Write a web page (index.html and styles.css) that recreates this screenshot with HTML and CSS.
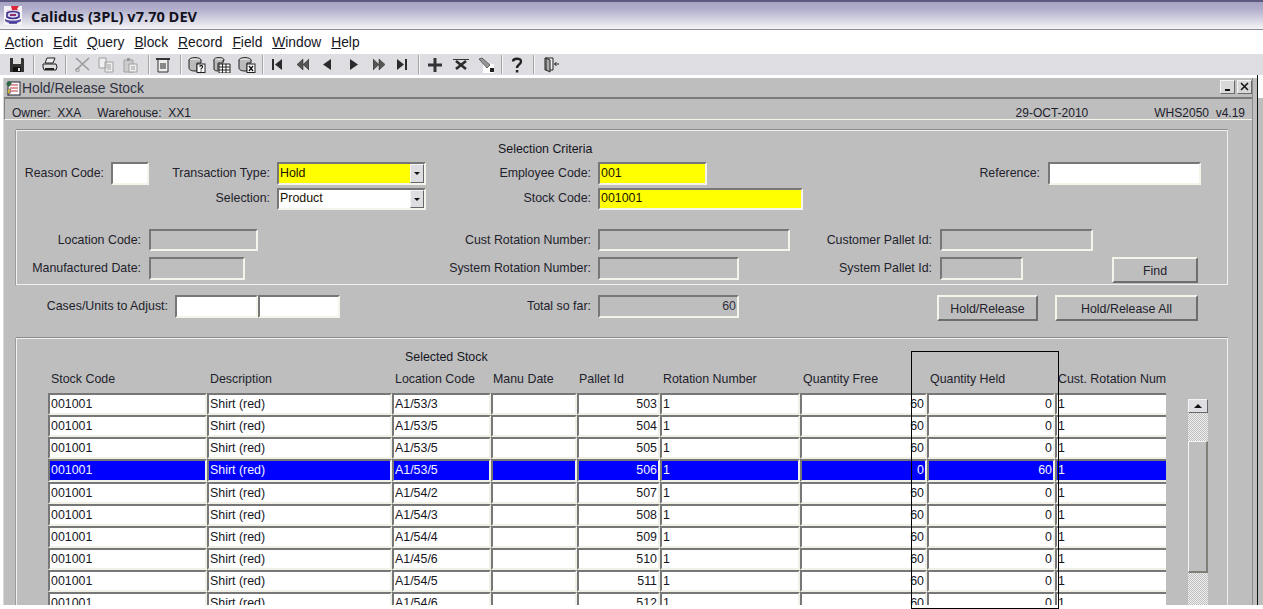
FILE: index.html
```html
<!DOCTYPE html>
<html lang="en">
<head>
<meta charset="utf-8">
<title>Calidus (3PL) v7.70 DEV</title>
<link rel="stylesheet" href="styles.css">
</head>
<body>
<div class="app">
  <header class="titlebar">
    <svg class="applogo" viewBox="0 0 18 19" width="18" height="19"><rect width="18" height="19" fill="#f6f3f6"/><path d="M7 0h8l-2 3 1 1H8z" fill="#d8283a"/><path d="M3 5h12" stroke="#e0a0b0"/><path d="M3 7c3-2 9-2 12 0v4c-3 2-9 2-12 0z" fill="#d8d4ec" stroke="#3a2f8f" stroke-width="1.600"/><path d="M6 8h6v2H6z" fill="#8f2f6f"/><path d="M1 13c4 2 12 2 16 0v2c-3 3-13 3-16 0z" fill="#5a4fa5"/><path d="M5 17h8" stroke="#3a2f8f" stroke-width="1.400"/></svg>
    <span class="apptitle">Calidus (3PL) v7.70 DEV</span>
  </header>
  <nav class="menubar">
    <span class="menu"><u>A</u>ction</span><span class="menu"><u>E</u>dit</span><span class="menu"><u>Q</u>uery</span><span class="menu"><u>B</u>lock</span><span class="menu"><u>R</u>ecord</span><span class="menu"><u>F</u>ield</span><span class="menu"><u>W</u>indow</span><span class="menu"><u>H</u>elp</span>
  </nav>
  <div class="toolbar">
    <svg class="tool t-first" viewBox="0 0 16 16"><path d="M1 1h13l1 1v13H1z" fill="#333"/><rect x="4" y="1" width="8" height="6" fill="#ddd"/><rect x="4" y="10" width="8" height="5" fill="#111"/><rect x="9" y="11" width="2" height="3" fill="#ddd"/></svg>
    <i class="sep s1"></i>
    <svg class="tool t-print" viewBox="0 0 16 16"><path d="M5 1h8L11 6H3z" fill="#eee" stroke="#222"/><path d="M1 7h13l1 3-1 3H2l-1-3z" fill="#ddd" stroke="#222"/><path d="M3 12h9" stroke="#222" stroke-width="2"/></svg>
    <i class="sep s2"></i>
    <svg class="tool t-cut" viewBox="0 0 16 16"><path d="M1 1l13 12M14 1L1 13" stroke="#9a9a9a" stroke-width="1.600" fill="none"/><circle cx="2.500" cy="13" r="1.800" fill="none" stroke="#9a9a9a"/></svg>
    <svg class="tool t-copy" viewBox="0 0 16 16"><path d="M1 1h7v10H1zM7 5h8v10H7z" fill="#eee" stroke="#a0a0a0"/><path d="M9 8h4M9 10h4M9 12h4" stroke="#a0a0a0"/></svg>
    <svg class="tool t-paste" viewBox="0 0 16 16"><path d="M2 3h9v12H2z" fill="#ccc" stroke="#a0a0a0"/><path d="M5 1h3v3H5z" fill="#999"/><path d="M7 7h8v8H7z" fill="#eee" stroke="#a0a0a0"/><path d="M9 10h4M9 12h4" stroke="#a0a0a0"/></svg>
    <i class="sep s3"></i>
    <svg class="tool t-list" viewBox="0 0 16 16"><path d="M1 1h14v2H1z" fill="#333"/><path d="M3 3v12h10V3" fill="#eee" stroke="#333"/><path d="M5 7h6M5 9h6M5 11h6" stroke="#222"/></svg>
    <i class="sep s4"></i>
    <svg class="tool t-q1" viewBox="0 0 18 16"><ellipse cx="7" cy="3" rx="6" ry="2.400" fill="#ddd" stroke="#222"/><path d="M1 3v8c0 2 3 3 6 3h2V6h4V3" fill="#bbb" stroke="#222"/><rect x="9" y="7" width="8" height="8.500" fill="#fff" stroke="#222"/><path d="M11.500 9.500c1-1.500 3.500-1 3 .7-.3 1-1.500 1-1.500 2.300M13 13.500v1" stroke="#111" fill="none" stroke-width="1.200"/></svg>
    <svg class="tool t-q2" viewBox="0 0 18 16"><ellipse cx="6" cy="3" rx="5" ry="2.400" fill="#ddd" stroke="#222"/><path d="M1 3v9c0 1.500 2 2 4 2V6h5V3" fill="#bbb" stroke="#222"/><path d="M6 7h11v9H6zM6 10h11M6 13h11M9.500 7v9M13 7v9" fill="#fff" stroke="#222"/></svg>
    <svg class="tool t-q3" viewBox="0 0 18 16"><ellipse cx="7" cy="3" rx="6" ry="2.400" fill="#ddd" stroke="#222"/><path d="M1 3v8c0 2 3 3 6 3h2V6h4V3" fill="#bbb" stroke="#222"/><rect x="9" y="7" width="8" height="8.500" fill="#fff" stroke="#222"/><path d="M11 9l4 5M15 9l-4 5" stroke="#111" stroke-width="1.300"/></svg>
    <i class="sep s5"></i>
    <svg class="nav n1" viewBox="0 0 12 13"><path d="M1 1h2v11H1zM11 1v11L4 6.500z" fill="#2b2b2b"/></svg>
    <svg class="nav n2" viewBox="0 0 12 13"><path d="M6 1v11L0 6.500zM12 1v11L6 6.500z" fill="#555" stroke="#222" stroke-width=".5"/></svg>
    <svg class="nav n3" viewBox="0 0 12 13"><path d="M10 1v11L2 6.500z" fill="#2b2b2b"/></svg>
    <svg class="nav n4" viewBox="0 0 12 13"><path d="M2 1v11l8-5.500z" fill="#2b2b2b"/></svg>
    <svg class="nav n5" viewBox="0 0 12 13"><path d="M0 1v11l6-5.500zM6 1v11l6-5.500z" fill="#555" stroke="#222" stroke-width=".5"/></svg>
    <svg class="nav n6" viewBox="0 0 12 13"><path d="M1 1v11l7-5.500zM9 1h2v11H9z" fill="#2b2b2b"/></svg>
    <i class="sep s6"></i>
    <svg class="tool t-plus" viewBox="0 0 16 16"><path d="M6.500 1h3v5.500H15v3H9.500V15h-3V9.500H1v-3h5.500z" fill="#333"/></svg>
    <svg class="tool t-del" viewBox="0 0 16 16"><path d="M0 2.500h16" stroke="#333"/><path d="M3 4l10 8M13 4L3 12" stroke="#2b2b2b" stroke-width="2.600"/></svg>
    <svg class="tool t-clear" viewBox="0 0 16 16"><rect x="5" y="7" width="11" height="9" fill="#fff"/><path d="M1 2l3-1 8 7-3 3z" fill="#999" stroke="#333" stroke-width=".7"/><rect x="12" y="11" width="4" height="4" fill="#222"/></svg>
    <i class="sep s7"></i>
    <svg class="tool t-help" viewBox="0 0 16 16"><path d="M4 4.500C4 1 12 .500 12 4.500c0 3-4 3-4 6.500" fill="none" stroke="#222" stroke-width="2.400"/><rect x="6.800" y="13" width="2.500" height="2.500" fill="#222"/></svg>
    <i class="sep s8"></i>
    <svg class="tool t-exit" viewBox="0 0 16 16"><path d="M1 1h8v12H1z" fill="#eee" stroke="#222"/><path d="M2 1l4 2v12l-4-2z" fill="#aaa" stroke="#222"/><path d="M10.500 7H15M10.500 7l2-2M10.500 7l2 2" stroke="#222" fill="none"/></svg>
  </div>
  <main class="mdi">
    <section class="window">
      <div class="winhead">
        <svg class="winicon" viewBox="0 0 16 16"><rect x="3" y="2" width="12" height="13" fill="#fff" stroke="#223"/><path d="M5 5h8M5 8h8M5 11h8" stroke="#c03040"/><path d="M1 4l3-3 3 2-3 4z" fill="#2a6a40"/><path d="M3 9l3 0-2 3 2 0-3 4 1-3H2z" fill="#e8d020" stroke="#302080" stroke-width=".4"/></svg>
        <span class="wintitle">Hold/Release Stock</span>
        <span class="winbtns"><span class="winbtn btn-min"></span><span class="winbtn btn-close">
          <svg viewBox="0 0 9 9" width="9" height="9"><path d="M1 1l7 7M8 1L1 8" stroke="#111" stroke-width="1.500"/></svg></span></span>
      </div>
      <div class="infobar">
        <span class="owner">Owner:&nbsp; XXA</span>
        <span class="wh">Warehouse:&nbsp; XX1</span>
        <span class="date">29-OCT-2010</span>
        <span class="ver">WHS2050&nbsp; v4.19</span>
      </div>
      <div class="content">
        <section class="panel criteria">
          <div class="panel-title">Selection Criteria</div>
          <div class="frow r1">
            <label class="lb w-reason">Reason Code:</label><span class="fld white f-reason"></span>
            <label class="lb w-tt">Transaction Type:</label><span class="fld yellow f-sel">Hold<span class="drop"></span></span>
            <label class="lb w-emp">Employee Code:</label><span class="fld yellow f-emp">001</span>
            <label class="lb w-ref">Reference:</label><span class="fld white f-ref"></span>
          </div>
          <div class="frow r2">
            <label class="lb w-selection">Selection:</label><span class="fld white f-sel">Product<span class="drop"></span></span>
            <label class="lb w-stock">Stock Code:</label><span class="fld yellow f-stock">001001</span>
          </div>
          <div class="frow r3">
            <label class="lb w-loc">Location Code:</label><span class="fld f-loc"></span>
            <label class="lb w-cust">Cust Rotation Number:</label><span class="fld f-cust"></span>
            <label class="lb w-cpal">Customer Pallet Id:</label><span class="fld f-cpal"></span>
          </div>
          <div class="frow r4">
            <label class="lb w-loc">Manufactured Date:</label><span class="fld f-man"></span>
            <label class="lb w-sys">System Rotation Number:</label><span class="fld f-sysrot"></span>
            <label class="lb w-spal">System Pallet Id:</label><span class="fld f-spal"></span>
            <span class="push btn b-find">Find</span>
          </div>
        </section>
        <div class="frow actions">
          <label class="lb w-cases">Cases/Units to Adjust:</label><span class="fld white f-case"></span><span class="fld white f-case2"></span>
          <label class="lb w-total">Total so far:</label><span class="fld f-total">60</span>
          <span class="push btn b-hold">Hold/Release</span>
          <span class="push btn b-all">Hold/Release All</span>
        </div>
        <section class="panel stock">
          <div class="stock-title">Selected Stock</div>
          <div class="grid head">
            <span>Stock Code</span><span>Description</span><span>Location Code</span><span>Manu Date</span><span>Pallet Id</span><span>Rotation Number</span><span>Quantity Free</span><span class="h-held">Quantity Held</span><span>Cust. Rotation Num</span>
          </div>
          <div class="rows">
            <div class="grid row"><span>001001</span><span>Shirt (red)</span><span>A1/53/3</span><span></span><span class="num">503</span><span>1</span><span class="num">60</span><span class="num">0</span><span>1</span></div>
            <div class="grid row"><span>001001</span><span>Shirt (red)</span><span>A1/53/5</span><span></span><span class="num">504</span><span>1</span><span class="num">60</span><span class="num">0</span><span>1</span></div>
            <div class="grid row"><span>001001</span><span>Shirt (red)</span><span>A1/53/5</span><span></span><span class="num">505</span><span>1</span><span class="num">60</span><span class="num">0</span><span>1</span></div>
            <div class="grid row sel"><span>001001</span><span>Shirt (red)</span><span>A1/53/5</span><span></span><span class="num">506</span><span>1</span><span class="num">0</span><span class="num">60</span><span>1</span></div>
            <div class="grid row"><span>001001</span><span>Shirt (red)</span><span>A1/54/2</span><span></span><span class="num">507</span><span>1</span><span class="num">60</span><span class="num">0</span><span>1</span></div>
            <div class="grid row"><span>001001</span><span>Shirt (red)</span><span>A1/54/3</span><span></span><span class="num">508</span><span>1</span><span class="num">60</span><span class="num">0</span><span>1</span></div>
            <div class="grid row"><span>001001</span><span>Shirt (red)</span><span>A1/54/4</span><span></span><span class="num">509</span><span>1</span><span class="num">60</span><span class="num">0</span><span>1</span></div>
            <div class="grid row"><span>001001</span><span>Shirt (red)</span><span>A1/45/6</span><span></span><span class="num">510</span><span>1</span><span class="num">60</span><span class="num">0</span><span>1</span></div>
            <div class="grid row"><span>001001</span><span>Shirt (red)</span><span>A1/54/5</span><span></span><span class="num">511</span><span>1</span><span class="num">60</span><span class="num">0</span><span>1</span></div>
            <div class="grid row"><span>001001</span><span>Shirt (red)</span><span>A1/54/6</span><span></span><span class="num">512</span><span>1</span><span class="num">60</span><span class="num">0</span><span>1</span></div>
          </div>
          <div class="scrollbar">
            <span class="sb-up"></span>
            <span class="sb-track short"></span>
            <span class="sb-thumb"></span>
            <span class="sb-track long"></span>
          </div>
        </section>
      </div>
    </section>
    <div class="highlight"></div>
  </main>
</div>
</body>
</html>
```
FILE: styles.css
```css
* { box-sizing: border-box; }
html, body { margin: 0; height: 100%; overflow: hidden; background: #fff; }
body { font: 12.400px/16px "Liberation Sans", Arial, sans-serif; color: #16161e; }
.app { width: 1263px; height: 609px; display: flex; flex-direction: column; overflow: hidden; }

.titlebar { height: 30px; flex: none; display: flex; align-items: center; padding-left: 4px;
  border-top: 2px solid #5c5880; border-bottom: 1px solid #8c8a9c;
  background: linear-gradient(#a6a3c3 0, #b0aecb 25%, #d9d8e4 70%, #f6f6f8 100%); }
.applogo { margin-top: -1px; }
.apptitle { margin-left: 9px; font: bold 14.600px/20px "Open Sans", "Liberation Sans", sans-serif; color: #12121e; }

.menubar { height: 24px; flex: none; display: flex; align-items: center; padding: 2px 0 0 5px; font-size: 13.800px; }
.menu { margin-right: 9.900px; }

.toolbar { height: 21px; flex: none; display: flex; align-items: center; background: #dedee2; padding-left: 9px; }
.tool { width: 16px; height: 16px; flex: none; }
.nav { width: 12px; height: 13px; flex: none; }
.sep { width: 1px; height: 19px; flex: none; background: #a5a5a8; box-shadow: 1px 0 0 #f5f5f5; }
.s1 { margin-left: 8px; } .t-print { margin-left: 8px; }
.s2 { margin-left: 7px; } .t-cut { margin-left: 9px; } .t-copy { margin-left: 7px; } .t-paste { margin-left: 8px; }
.s3 { margin-left: 10px; } .t-list { margin-left: 6px; }
.s4 { margin-left: 9px; } .t-q1 { margin-left: 7px; width: 18px; } .t-q2 { margin-left: 7px; width: 18px; } .t-q3 { margin-left: 7px; width: 18px; }
.s5 { margin-left: 6px; } .n1 { margin-left: 8px; } .n2 { margin-left: 14px; } .n3 { margin-left: 12px; } .n4 { margin-left: 15px; } .n5 { margin-left: 13px; } .n6 { margin-left: 11px; }
.s6 { margin-left: 10px; } .t-plus { margin-left: 8px; } .t-del { margin-left: 10px; } .t-clear { margin-left: 9px; }
.s7 { margin-left: 7px; } .t-help { margin-left: 7px; }
.s8 { margin-left: 8px; } .t-exit { margin-left: 10px; }

.mdi { flex: 1; min-height: 0; margin-top: 3px; padding-left: 3px; position: relative; }
.mdi::before { content: ""; position: absolute; left: 1257px; top: -3px; width: 1px; height: 530px; background: #111; }
.mdi::after { content: ""; position: absolute; left: 1258px; top: 20px; width: 5px; height: 507px; background: #bebebe; }
.window { width: 1250px; height: 527px; background: #bebebe; box-shadow: 4px 0 0 #bebebe; border-left: 1px solid #d8d8d8; border-right: 1px solid #8c8c8c; }
.winhead { height: 19px; display: flex; align-items: center; padding-left: 1px; color: #2e3040; font-size: 13.900px; }
.winicon { width: 16px; height: 16px; flex: none; }
.wintitle { margin-left: 1px; }
.winbtns { margin-left: auto; margin-right: 0; display: flex; gap: 2px; margin-top: -2px; }
.winbtn { width: 15px; height: 14px; background: #d8d8d8; border: 1px solid; border-color: #f4f4f4 #6a6a6a #6a6a6a #f4f4f4; display: flex; align-items: center; justify-content: center; }
.btn-min::after { content: ""; width: 5px; height: 2px; background: #111; margin-top: 6px; }
.infobar { height: 23px; display: flex; align-items: flex-end; font-size: 12px; line-height: 12px; padding-left: 8px; border-top: 2px solid #7c7c7c; border-bottom: 1px solid #f4f4ea; border-left: 1px solid #808080; color: #20202c; }
.infobar .owner { margin-left: -1px; }
.wh { margin-left: 16px; }
.date { margin-left: auto; }
.ver { margin-left: 66px; margin-right: 7px; }

.content { padding: 10px 0 0 12px; }
.panel { width: 1212px; border: 1px solid #f0f0f0; box-shadow: 0 -1px 0 #8c8c8c, -1px 0 0 #9c9c9c; position: relative; }
.criteria { height: 155px; padding-top: 10px; }
.panel-title { height: 16px; padding-left: 481px; }
.frow { display: flex; align-items: flex-start; }
.lb { display: block; text-align: right; padding-right: 7px; padding-top: 2px; flex: none; color: #22222c; white-space: nowrap; }
.fld { display: block; flex: none; height: 23px; padding: 0 1px; line-height: 18px; border: 2px solid; border-color: #777 #f4f4ea #f4f4ea #777; position: relative; color: #1a1200; }
.white { background: #fff; } .yellow { background: #ff0; }
.r1 { margin-top: 5px; } .r2 { margin-top: 3px; } .r3 { margin-top: 19px; } .r4 { margin-top: 6px; }
.r1 .lb, .r3 .lb, .r4 .lb { padding-top: 3px; }
.r2 .fld { height: 22px; line-height: 16px; }
.r3 .fld { height: 22px; }
.r4 .fld { height: 23px; }
.w-reason { width: 94px; } .f-reason { width: 38px; }
.w-tt { width: 128px; } .f-sel { width: 149px; }
.w-emp { width: 172px; } .f-emp { width: 109px; }
.w-ref { width: 341px; padding-right: 8px; } .f-ref { width: 153px; }
.w-selection { width: 260px; }
.w-stock { width: 172px; } .f-stock { width: 205px; }
.w-loc { width: 132px; padding-right: 8px; } .f-loc { width: 109px; }
.w-cust { width: 340px; } .f-cust { width: 192px; }
.w-cpal { width: 150px; padding-right: 8px; } .f-cpal { width: 153px; }
.f-man { width: 96px; }
.w-sys { width: 353px; } .f-sysrot { width: 141px; }
.w-spal { width: 201px; padding-right: 8px; } .f-spal { width: 83px; }
.drop { position: absolute; right: 0; top: 0; bottom: 0; width: 14px; background: #dedee2; border: 1px solid; border-color: #f4f4f4 #666 #666 #f4f4f4; }
.drop::after { content: ""; position: absolute; left: 2.500px; top: 7px; border: 3px solid transparent; border-top: 3px solid #111; border-bottom: 0; border-left-width: 3.500px; border-right-width: 3.500px; }
.btn { display: flex; align-items: center; justify-content: center; background: #bebebe; border: 2px solid; border-color: #f4f4ea #6e6e6e #6e6e6e #f4f4ea; height: 26px; flex: none; color: #22222c; padding-top: 1px; }
.b-find { width: 86px; margin-left: 89px; }
.actions { height: 26px; margin-top: 10px; }
.actions .lb { padding-top: 3px; }
.w-cases { width: 159px; } .f-case { width: 83px; } .f-case2 { width: 82px; }
.w-total { width: 258px; } .f-total { width: 141px; text-align: right; color: #30303c; }
.b-hold { width: 101px; margin-left: 198px; } .b-all { width: 143px; margin-left: 17px; }

.stock { margin-top: 17px; height: 267px; overflow: hidden; border-bottom: 0; }
.stock-title { position: absolute; left: 388px; top: 10px; }
.grid { display: grid; grid-template-columns: 159px 185px 99px 86px 83px 140px 127px 128px 111px; }
.head { margin-left: 31px; padding-top: 32px; height: 54px; color: #22222c; white-space: nowrap; }
.head span { padding-left: 3px; }
.head span:nth-child(4), .head span:nth-child(5) { padding-left: 2px; }
.rows { margin-left: 31px; width: 1118px; display: flex; flex-direction: column; }
.row { height: 22.150px; flex: none; }
.row span { display: block; height: 100%; background: #fff; border: 2px solid; border-color: #777 #f0f0e6 #f0f0e6 #777; padding: 0 1px; line-height: 19px; white-space: nowrap; overflow: hidden; color: #16161e; }
.row span:last-child { border-right: 0; }
.row .num { text-align: right; padding-right: 1px; }
.sel span { background: #00f; color: #f4f4ff; }
.scrollbar { position: absolute; left: 1171px; top: 60px; width: 20px; display: flex; flex-direction: column; }
.sb-up { height: 14px; background: #dedee2; border: 1px solid; border-color: #f4f4f4 #666 #666 #f4f4f4; position: relative; }
.sb-up::after { content: ""; position: absolute; left: 5px; top: 4px; border: 4px solid transparent; border-bottom: 4px solid #111; border-top: 0; }
.sb-track { display: block; background: repeating-conic-gradient(#bebebe 0 25%, #f0f0f0 0 50%) 0 0 / 2px 2px; }
.short { height: 28px; } .long { height: 40px; }
.sb-thumb { height: 132px; background: #bebebe; border: 1px solid; border-width: 1px 2px 2px 1px; border-color: #f4f4f4 #808078 #808078 #f4f4f4; }
.highlight { position: absolute; left: 911px; top: 273px; width: 148px; height: 258px; border: 1px solid #000; pointer-events: none; }
```
